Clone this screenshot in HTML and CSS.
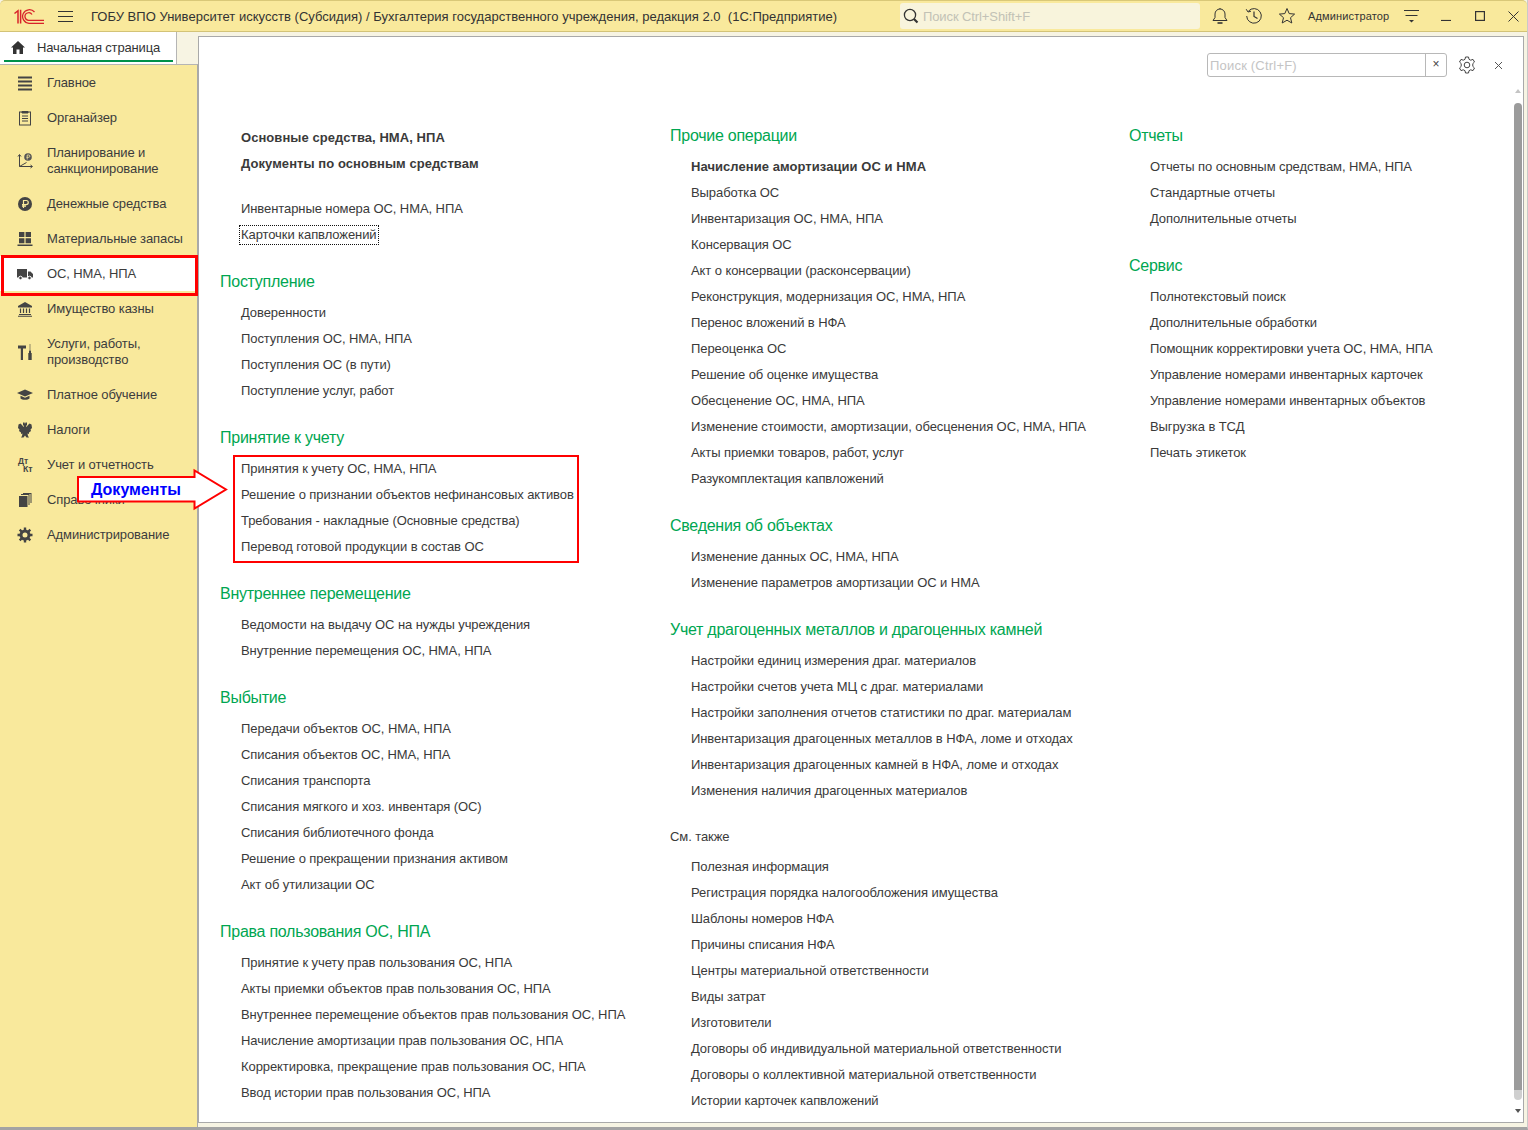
FILE: index.html
```html
<!DOCTYPE html>
<html>
	<head>
		<meta charset="utf-8">
		<title>ОС, НМА, НПА</title>
		<link rel="stylesheet" href="styles.css">
	</head>
	<body>
		<div id="app">
			<div class="titlebar">
				<svg class="logo" viewBox="0 0 30 15" width="30" height="15" fill="none" stroke="#d8232a" stroke-width="1.3">
					<path d="M0.500 4.500L4 1.700V14.500M6.600 0.700V14.500" stroke-width="1.500"/>
					<path d="M20.500 3A6.800 6.800 0 1 0 15 14.300H30"/>
					<path d="M18 5.500A3.800 3.800 0 1 0 15 11.300H30"/>
				</svg>
				<svg class="burger" viewBox="0 0 15 13" width="15" height="13" stroke="#333" stroke-width="1"><path d="M0 1.500H15M0 6.500H15M0 11.500H15"/></svg>
				<div class="titlebar__title">ГОБУ ВПО Университет искусств (Субсидия) / Бухгалтерия государственного учреждения, редакция 2.0&nbsp; (1С:Предприятие)</div>
				<div class="global-search">
					<svg viewBox="0 0 18 18" width="18" height="18" fill="none" stroke="#333"><circle cx="8" cy="8" r="5.600" stroke-width="1.300"/><path d="M12 12L15.500 15.500" stroke-width="2.200"/></svg>
					<span>Поиск Ctrl+Shift+F</span>
				</div>
				<div class="titlebar__tools">
					<svg class="tool-bell" viewBox="0 0 16 18" width="16" height="18" fill="none" stroke="#333"><path d="M1 13.500H15L13 10.500V7A5 5 0 0 0 3 7V10.500Z"/><path d="M5.500 16H10.500" stroke-width="1.600"/><path d="M8 1V2"/></svg>
					<svg class="tool-history" viewBox="0 0 18 18" width="18" height="18" fill="none" stroke="#333"><path d="M3.400 4.200A7.300 7.300 0 1 1 1.700 9"/><path d="M1.200 2.200L3 5L6 4.200"/><path d="M9 4.500V9.500L12.500 11.500" stroke-width="1.200"/></svg>
					<svg class="tool-star" viewBox="0 0 18 18" width="18" height="18" fill="none" stroke="#333"><path d="M9 1.500L11.200 6.600L16.600 7.100L12.500 10.700L13.800 16L9 13.200L4.200 16L5.500 10.700L1.400 7.100L6.800 6.600Z"/></svg>
					<div class="titlebar__user">Администратор</div>
					<svg class="tool-lines" viewBox="0 0 15 14" width="15" height="14" stroke="#333" fill="#333"><path d="M0 1.500H15M1.500 6.500H13.500" fill="none"/><path d="M5 11H10L7.500 13.500Z" stroke="none"/></svg>
					<svg class="tool-min" viewBox="0 0 10 10" width="10" height="10" stroke="#333" stroke-width="1.200"><path d="M0 9.500H10"/></svg>
					<svg class="tool-max" viewBox="0 0 10 10" width="10" height="10" fill="none" stroke="#333" stroke-width="1.200"><rect x="0.600" y="0.600" width="8.800" height="8.800"/></svg>
					<svg class="tool-close" viewBox="0 0 11 11" width="11" height="11" stroke="#333"><path d="M0.500 0.500L10.500 10.500M10.500 0.500L0.500 10.500"/></svg>
				</div>
			</div>

			<div class="workspace">
				<div class="left">
					<div class="home-tab">
						<svg viewBox="0 0 14 13" width="14" height="13" fill="#333"><path d="M7 0L14 6.500H12V13H8.500V8.500H5.500V13H2V6.500H0Z"/></svg>
						<span>Начальная страница</span>
					</div>
					<div class="sidebar">
						<div class="side-item">
							<svg viewBox="0 0 16 16" width="16" height="16" fill="#444"><path d="M1 1.500H15V3.500H1ZM1 5.500H15V7.500H1ZM1 9.500H15V11.500H1ZM1 13.500H15V15.500H1Z"/></svg>
							<span>Главное</span>
						</div>
						<div class="side-item">
							<svg viewBox="0 0 16 16" width="16" height="16" fill="none" stroke="#444"><rect x="2.500" y="2" width="11" height="13"/><path d="M5 1.500H11V3H5Z" fill="#444"/><path d="M5 6H11M5 8.500H11M5 11H11"/></svg>
							<span>Органайзер</span>
						</div>
						<div class="side-item">
							<svg viewBox="0 0 16 16" width="16" height="16" fill="none" stroke="#444"><path d="M2.500 2V13.500H15M1 3.500L2.500 1.500L4 3.500M13.500 12L15.500 13.500L13.500 15M2.500 13.500L9.500 9.500"/><circle cx="11" cy="4" r="3.800" fill="#555" stroke="none"/><path d="M10.200 6.500V2H11.700A1.100 1.100 0 0 1 11.700 4.300H9.500" stroke="#f9e99c" stroke-width="0.800"/></svg>
							<span>Планирование и санкционирование</span>
						</div>
						<div class="side-item">
							<svg viewBox="0 0 16 16" width="16" height="16"><circle cx="8" cy="8" r="7" fill="#444"/><path d="M6.500 12V4.500H9.200A2 2 0 0 1 9.200 8.600H5M5 10.200H9" fill="none" stroke="#f9e99c" stroke-width="1.200"/></svg>
							<span>Денежные средства</span>
						</div>
						<div class="side-item">
							<svg viewBox="0 0 16 16" width="16" height="16" fill="#444"><path d="M2 1H7.400V6H2ZM8.600 1H14V6H8.600ZM2 7.200H7.400V12.200H2ZM8.600 7.200H14V12.200H8.600ZM0.500 13.500H15.500V15H0.500Z"/></svg>
							<span>Материальные запасы</span>
						</div>
						<div class="side-item side-item--active">
							<svg viewBox="0 0 16 16" width="16" height="16" fill="#444"><path d="M0 3H10V11.500H0ZM11 5.500H13.500L16 8V11.500H11Z"/><circle cx="3.500" cy="12" r="1.800" stroke="#fff"/><circle cx="12.500" cy="12" r="1.800" stroke="#fff"/></svg>
							<span>ОС, НМА, НПА</span>
						</div>
						<div class="side-item">
							<svg viewBox="0 0 16 16" width="16" height="16" fill="#444"><path d="M8 1L15 5V6.500H1V5ZM2 13H14V14H2ZM1 14.700H15V15.700H1Z"/><path d="M3.500 7.500V12M6.500 7.500V12M9.500 7.500V12M12.500 7.500V12" stroke="#444" stroke-width="1.200"/></svg>
							<span>Имущество казны</span>
						</div>
						<div class="side-item">
							<svg viewBox="0 0 16 16" width="16" height="16" fill="#444"><path d="M1 1.500H9V4.500H6V16H3.800V4.500H1ZM12.700 0H13.300V6H12.700ZM12 6.500H14V9H14.700V16H11.300V9H12Z"/></svg>
							<span>Услуги, работы, производство</span>
						</div>
						<div class="side-item">
							<svg viewBox="0 0 16 16" width="16" height="16" fill="#444"><path d="M8 2.500L16 6L8 9.500L0 6ZM3.500 8.700L8 10.700L12.500 8.700V11.500C11 13.300 5 13.300 3.500 11.500Z"/></svg>
							<span>Платное обучение</span>
						</div>
						<div class="side-item">
							<svg viewBox="0 0 16 16" width="16" height="16" fill="#444"><path d="M6 0.500H7.500L8 2L8.500 0.500H10L10 3L9 4L9.500 5L11 3L12.500 1.500L14.500 2.500L15 6L13.500 7.500L14 9L12 10.500L12 12L10.500 11.500L11 14L12 15.500H9.500L8 13.500L6.500 15.500H4L5 14L5.500 11.500L4 12L4 10.500L2 9L2.500 7.500L1 6L1.500 2.500L3.500 1.500L5 3L6.500 5L7 4L6 3Z"/></svg>
							<span>Налоги</span>
						</div>
						<div class="side-item">
							<svg class="dt-kt-icon" viewBox="0 0 16 16" width="16" height="16"><text class="dt-kt" x="1" y="7" textLength="10" lengthAdjust="spacingAndGlyphs">Дт</text><text class="dt-kt" x="6" y="15" textLength="9.500" lengthAdjust="spacingAndGlyphs">Кт</text></svg>
							<span>Учет и отчетность</span>
						</div>
						<div class="side-item">
							<svg viewBox="0 0 16 16" width="16" height="16" fill="#444"><path d="M2 4H10.500V15H2ZM11.500 3H4V2H12.500V13H11.500ZM13.500 2H6V1H14.500V11H13.500Z"/></svg>
							<span>Справочники</span>
						</div>
						<div class="side-item">
							<svg viewBox="0 0 16 16" width="16" height="16" fill="none" stroke="#444"><circle cx="8" cy="8" r="4" stroke-width="3"/><path d="M8 0.500V3M8 13V15.500M0.500 8H3M13 8H15.500M2.700 2.700L4.500 4.500M11.500 11.500L13.300 13.300M13.300 2.700L11.500 4.500M4.500 11.500L2.700 13.300" stroke-width="2.400"/></svg>
							<span>Администрирование</span>
						</div>
					</div>
				</div>

				<div class="panel">
					<div class="panel__top">
						<div class="panel-search">
							<span class="panel-search__hint">Поиск (Ctrl+F)</span>
							<span class="panel-search__clear">×</span>
						</div>
						<svg class="panel__gear" viewBox="0 0 18 18" width="18" height="18" fill="none" stroke="#444"><path d="M7.500 1H10.500L11 3.300L12.700 4.200L15 3.400L16.500 6L14.800 7.600V10.400L16.500 12L15 14.600L12.700 13.800L11 14.700L10.500 17H7.500L7 14.700L5.300 13.800L3 14.600L1.500 12L3.200 10.400V7.600L1.500 6L3 3.400L5.300 4.200L7 3.300Z"/><circle cx="9" cy="9" r="2.800"/></svg>
						<svg class="panel__close" viewBox="0 0 9 9" width="9" height="9" stroke="#555"><path d="M1 1L8 8M8 1L1 8"/></svg>
					</div>
					<div class="columns">
						<div class="column column--first">
							<div class="link link--bold">Основные средства, НМА, НПА</div>
							<div class="link link--bold">Документы по основным средствам</div>
							<div class="link link--gap">Инвентарные номера ОС, НМА, НПА</div>
							<div class="link"><span class="focused">Карточки капвложений</span></div>

							<h2 class="heading">Поступление</h2>
							<div class="link">Доверенности</div>
							<div class="link">Поступления ОС, НМА, НПА</div>
							<div class="link">Поступления ОС (в пути)</div>
							<div class="link">Поступление услуг, работ</div>

							<h2 class="heading">Принятие к учету</h2>
							<div class="link">Принятия к учету ОС, НМА, НПА</div>
							<div class="link">Решение о признании объектов нефинансовых активов</div>
							<div class="link">Требования - накладные (Основные средства)</div>
							<div class="link">Перевод готовой продукции в состав ОС</div>

							<h2 class="heading">Внутреннее перемещение</h2>
							<div class="link">Ведомости на выдачу ОС на нужды учреждения</div>
							<div class="link">Внутренние перемещения ОС, НМА, НПА</div>

							<h2 class="heading">Выбытие</h2>
							<div class="link">Передачи объектов ОС, НМА, НПА</div>
							<div class="link">Списания объектов ОС, НМА, НПА</div>
							<div class="link">Списания транспорта</div>
							<div class="link">Списания мягкого и хоз. инвентаря (ОС)</div>
							<div class="link">Списания библиотечного фонда</div>
							<div class="link">Решение о прекращении признания активом</div>
							<div class="link">Акт об утилизации ОС</div>

							<h2 class="heading">Права пользования ОС, НПА</h2>
							<div class="link">Принятие к учету прав пользования ОС, НПА</div>
							<div class="link">Акты приемки объектов прав пользования ОС, НПА</div>
							<div class="link">Внутреннее перемещение объектов прав пользования ОС, НПА</div>
							<div class="link">Начисление амортизации прав пользования ОС, НПА</div>
							<div class="link">Корректировка, прекращение прав пользования ОС, НПА</div>
							<div class="link">Ввод истории прав пользования ОС, НПА</div>
						</div>

						<div class="column column--second">
							<h2 class="heading heading--top">Прочие операции</h2>
							<div class="link link--bold">Начисление амортизации ОС и НМА</div>
							<div class="link">Выработка ОС</div>
							<div class="link">Инвентаризация ОС, НМА, НПА</div>
							<div class="link">Консервация ОС</div>
							<div class="link">Акт о консервации (расконсервации)</div>
							<div class="link">Реконструкция, модернизация ОС, НМА, НПА</div>
							<div class="link">Перенос вложений в НФА</div>
							<div class="link">Переоценка ОС</div>
							<div class="link">Решение об оценке имущества</div>
							<div class="link">Обесценение ОС, НМА, НПА</div>
							<div class="link">Изменение стоимости, амортизации, обесценения ОС, НМА, НПА</div>
							<div class="link">Акты приемки товаров, работ, услуг</div>
							<div class="link">Разукомплектация капвложений</div>

							<h2 class="heading">Сведения об объектах</h2>
							<div class="link">Изменение данных ОС, НМА, НПА</div>
							<div class="link">Изменение параметров амортизации ОС и НМА</div>

							<h2 class="heading">Учет драгоценных металлов и драгоценных камней</h2>
							<div class="link">Настройки единиц измерения драг. материалов</div>
							<div class="link">Настройки счетов учета МЦ с драг. материалами</div>
							<div class="link">Настройки заполнения отчетов статистики по драг. материалам</div>
							<div class="link">Инвентаризация драгоценных металлов в НФА, ломе и отходах</div>
							<div class="link">Инвентаризация драгоценных камней в НФА, ломе и отходах</div>
							<div class="link">Изменения наличия драгоценных материалов</div>

							<div class="see-also">См. также</div>
							<div class="link">Полезная информация</div>
							<div class="link">Регистрация порядка налогообложения имущества</div>
							<div class="link">Шаблоны номеров НФА</div>
							<div class="link">Причины списания НФА</div>
							<div class="link">Центры материальной ответственности</div>
							<div class="link">Виды затрат</div>
							<div class="link">Изготовители</div>
							<div class="link">Договоры об индивидуальной материальной ответственности</div>
							<div class="link">Договоры о коллективной материальной ответственности</div>
							<div class="link">Истории карточек капвложений</div>
						</div>

						<div class="column">
							<h2 class="heading heading--top">Отчеты</h2>
							<div class="link">Отчеты по основным средствам, НМА, НПА</div>
							<div class="link">Стандартные отчеты</div>
							<div class="link">Дополнительные отчеты</div>

							<h2 class="heading">Сервис</h2>
							<div class="link">Полнотекстовый поиск</div>
							<div class="link">Дополнительные обработки</div>
							<div class="link">Помощник корректировки учета ОС, НМА, НПА</div>
							<div class="link">Управление номерами инвентарных карточек</div>
							<div class="link">Управление номерами инвентарных объектов</div>
							<div class="link">Выгрузка в ТСД</div>
							<div class="link">Печать этикеток</div>
						</div>
					</div>
					<div class="scrollbar">
						<div class="scrollbar__up"></div>
						<div class="scrollbar__thumb"></div>
						<div class="scrollbar__down"></div>
					</div>
				</div>
			</div>

			<div class="annot-box"></div>
			<div class="annot-arrow">
				<svg viewBox="0 0 153 43" width="153" height="43"><path d="M1 9H117.500V2.500L149 21.500L117.500 40.500V33.500H1Z" fill="#fff" stroke="#f00" stroke-width="2"/></svg>
				<span class="annot-arrow__text">Документы</span>
			</div>
		</div>
	</body>
</html>
```

FILE: styles.css
```css
* {
	box-sizing: border-box;
}
html, body {
	height: 100%;
	margin: 0;
	overflow: hidden;
}
body {
	font-family: "Liberation Sans", Arial, sans-serif;
	font-size: 13px;
	color: #333;
}
#app {
	position: relative;
	width: 1528px;
	height: 1130px;
	display: flex;
	flex-direction: column;
	background: #f7f4e3;
	border-bottom: 3px solid #a3a3a3;
	border-right: 1px solid #c9c9c9;
	overflow: hidden;
}
svg {
	display: block;
	flex: none;
}

/* title bar */
.titlebar {
	height: 32px;
	flex: none;
	display: flex;
	align-items: center;
	background: #f9e99c;
	border-top: 1px solid #d9c878;
	border-bottom: 1px solid #d3c377;
	border-radius: 5px 5px 0 0;
	padding-left: 14px;
}
.burger {
	margin-left: 14px;
}
.titlebar__title {
	width: 809px;
	margin-left: 18px;
	font-size: 13px;
	letter-spacing: 0.02px;
	white-space: nowrap;
}
.global-search {
	width: 300px;
	height: 26px;
	display: flex;
	align-items: center;
	gap: 3px;
	padding-left: 2px;
	background: #f8f4dc;
	border-radius: 3px;
	font-size: 13px;
	letter-spacing: -0.1px;
	color: #c2c2b6;
}
.titlebar__tools {
	display: flex;
	align-items: center;
	margin-left: 12px;
}
.tool-history {
	margin-left: 17px;
}
.tool-star {
	margin-left: 15px;
}
.titlebar__user {
	margin-left: 12px;
	width: 82px;
	font-size: 11px;
	letter-spacing: 0.15px;
	white-space: nowrap;
}
.tool-lines {
	margin-left: 14px;
}
.tool-min {
	margin-left: 22px;
}
.tool-max {
	margin-left: 24px;
}
.tool-close {
	margin-left: 23px;
}

/* left part */
.workspace {
	flex: 1;
	display: flex;
	min-height: 0;
}
.left {
	width: 198px;
	flex: none;
	display: flex;
	flex-direction: column;
}
.home-tab {
	width: 177px;
	height: 32px;
	flex: none;
	display: flex;
	align-items: center;
	gap: 12px;
	padding: 0 0 1px 11px;
	background: #fff;
	border-right: 1px solid #b5b5b5;
	letter-spacing: -0.15px;
	position: relative;
}
.home-tab::after {
	content: "";
	position: absolute;
	left: 4px;
	right: 3px;
	bottom: 2px;
	height: 2px;
	background: #00914a;
}
.sidebar {
	flex: 1;
	background: #f9e99c;
	border-top: 1px solid #b5b5b5;
	border-right: 1px solid #a9a9a9;
}
.side-item {
	display: flex;
	align-items: center;
	gap: 14px;
	padding: 9.5px 8px 9.5px 17px;
	line-height: 16px;
	font-size: 13px;
	letter-spacing: -0.1px;
	color: #3c3c3c;
	position: relative;
}
.side-item--active {
	background: #fff;
}
.side-item--active::after {
	content: "";
	position: absolute;
	left: 1px;
	right: -1px;
	top: -1.5px;
	bottom: -4.500px;
	border: 3px solid #f00;
}
.dt-kt-icon {
	overflow: visible;
}
.dt-kt {
	font-size: 9.500px;
	font-weight: bold;
	fill: #444;
}

/* main panel */
.panel {
	flex: 1;
	margin: 4px 3px 4px 0;
	background: #fff;
	border: 1px solid #a9a9a9;
	position: relative;
	display: flex;
	flex-direction: column;
	min-height: 0;
	overflow: hidden;
}
.panel__top {
	flex: none;
	height: 86px;
	display: flex;
	align-items: flex-start;
	justify-content: flex-end;
	padding: 16px 19px 0 0;
}
.panel-search {
	width: 240px;
	height: 24px;
	display: flex;
	align-items: center;
	border: 1px solid #b8b8b8;
	border-radius: 3px;
	font-size: 13px;
}
.panel-search__hint {
	flex: 1;
	padding-left: 2px;
	color: #c4c4c4;
	letter-spacing: 0.2px;
}
.panel-search__clear {
	width: 21px;
	height: 22px;
	line-height: 21px;
	text-align: center;
	border-left: 1px solid #b8b8b8;
	color: #444;
	font-size: 12px;
}
.panel__gear {
	margin: 3px 0 0 11px;
}
.panel__close {
	margin: 8px 1px 0 18px;
}
.columns {
	display: grid;
	grid-template-columns: 450px 459px 1fr;
	padding-left: 21px;
}
.column {
	min-width: 0;
}
.column--first {
	padding-top: 2px;
}
.link {
	height: 26px;
	line-height: 26px;
	padding-left: 21px;
	font-size: 13px;
	letter-spacing: -0.08px;
	white-space: nowrap;
	color: #3a3a3a;
}
.link--bold {
	font-weight: bold;
	letter-spacing: 0.06px;
}
.link--gap {
	margin-top: 19px;
}
.focused {
	display: inline-block;
	line-height: 16px;
	outline: 1px dotted #111;
	outline-offset: 1px;
}
.heading {
	height: 26px;
	margin: 21px 0 5px;
	font-size: 16px;
	font-weight: normal;
	line-height: 26px;
	letter-spacing: -0.26px;
	color: #00a651;
	white-space: nowrap;
}
.heading--top {
	margin-top: 0;
}
.see-also {
	height: 26px;
	line-height: 26px;
	margin: 20px 0 4px;
	font-size: 13px;
	letter-spacing: -0.08px;
	color: #3a3a3a;
}

/* scrollbar */
.scrollbar {
	position: absolute;
	top: 52px;
	right: 1px;
	bottom: 9px;
	width: 8px;
	display: flex;
	flex-direction: column;
	align-items: center;
}
.scrollbar__up, .scrollbar__down {
	width: 0;
	height: 0;
	border-left: 3.500px solid transparent;
	border-right: 3.500px solid transparent;
}
.scrollbar__up {
	border-bottom: 4px solid #c4c4c4;
}
.scrollbar__down {
	border-top: 4px solid #555;
}
.scrollbar__thumb {
	width: 8px;
	flex: 1;
	margin: 10px 0 9px;
	border-radius: 4px;
	background: linear-gradient(to bottom, #9b9b9b 99%, #cfcfcf 99%);
}

/* annotations over the screenshot */
.annot-box {
	position: absolute;
	left: 233px;
	top: 455px;
	width: 346px;
	height: 108px;
	border: 2px solid #f00;
}
.annot-arrow {
	position: absolute;
	left: 77px;
	top: 468px;
	width: 153px;
	height: 43px;
}
.annot-arrow__text {
	position: absolute;
	left: 14px;
	top: 12px;
	font-size: 16px;
	font-weight: bold;
	line-height: 20px;
	color: #00f;
}
```
